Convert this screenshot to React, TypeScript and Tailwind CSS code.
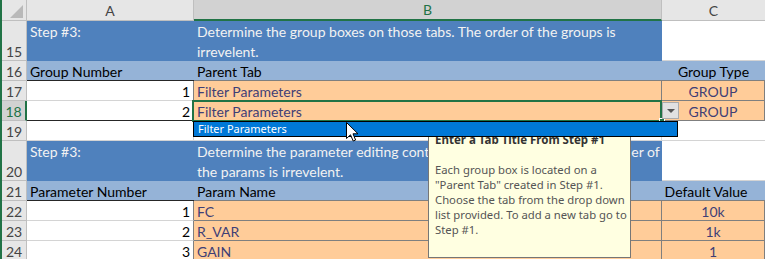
import type { ReactNode } from "react"

type CellProps = {
  children?: ReactNode
  className?: string
}

// generic sheet cell: text sits at the bottom like Excel does
function Cell({ children, className = "" }: CellProps) {
  return (
    <div className={`flex items-end overflow-hidden whitespace-nowrap px-[3px] leading-[16px] ${className}`}>
      {children}
    </div>
  )
}

// two line wrapped cell (rows 15 and 20)
function Wrap({ children, className = "" }: CellProps) {
  return (
    <div className={`flex items-end overflow-hidden whitespace-nowrap px-[3px] ${className}`}>
      <div className="-mb-px leading-[20px]">{children}</div>
    </div>
  )
}

function RowHead({ n, selected = false }: { n: number; selected?: boolean }) {
  return (
    <div
      className={`flex items-end justify-center leading-[17px] text-[14px] ${
        selected
          ? "bg-[#d2d2d2] text-[#217346] border-r-2 border-r-[#217346] border-b border-b-[#bfbfbf]"
          : "bg-[#e6e6e6] text-[#444] border-r border-b border-[#bfbfbf]"
      }`}
    >
      {n}
    </div>
  )
}

const blueDark = "bg-[#4f81bd] text-[#f2f2f2]"
const blueLight = "bg-[#95b3d7] text-black"
const input = "bg-[#ffcc99] text-[#3f3f76] border-r border-b border-[#7f7f7f]"
const plain = "bg-white text-black border-r border-b border-[#d4d4d4]"

export default function App() {
  return (
    <div className="relative flex h-[259px] w-[765px] overflow-hidden bg-white font-['Lato',sans-serif] text-[14px]">
      {/* green frame edge */}
      <div className="w-[2px] shrink-0 bg-[#217346]" />

      <div className="grid flex-1 grid-cols-[25px_167px_468px_1fr] grid-rows-[21px_40px_20px_20px_20px_20px_40px_20px_20px_20px_20px]">
        {/* column headers */}
        <div className="relative border-r border-b border-[#bfbfbf] bg-[#e6e6e6]">
          <div className="absolute right-[3px] bottom-[2px] h-0 w-0 border-l-[13px] border-t-[13px] border-l-transparent border-t-transparent border-b-0 border-r-[13px] border-r-[#b9b9b9]" />
        </div>
        <div className="flex items-center justify-center border-r border-b border-[#bfbfbf] bg-[#e6e6e6] text-[14px] text-[#444]">A</div>
        <div className="flex items-center justify-center border-r border-r-[#bfbfbf] border-b-2 border-b-[#217346] bg-[#d2d2d2] text-[14px] text-[#217346]">B</div>
        <div className="flex items-center justify-center border-b border-[#bfbfbf] bg-[#e6e6e6] text-[14px] text-[#444]">C</div>

        {/* 15 */}
        <RowHead n={15} />
        <Wrap className={blueDark}>
          Step #3:<br />&nbsp;
        </Wrap>
        <Wrap className={blueDark}>
          Determine the group boxes on those tabs. The order of the groups is
          <br />
          irrevelent.
        </Wrap>
        <Cell className="border-b border-[#d4d4d4]" />

        {/* 16 */}
        <RowHead n={16} />
        <Cell className={`${blueLight} border-b border-[#262626]`}>Group Number</Cell>
        <Cell className={`${blueLight} border-b border-[#7f7f7f]`}>Parent Tab</Cell>
        <Cell className={`${blueLight} justify-center border-b border-[#7f7f7f]`}>Group Type</Cell>

        {/* 17 */}
        <RowHead n={17} />
        <Cell className="justify-end border-r border-r-[#7f7f7f] border-b border-b-[#d4d4d4] bg-white">1</Cell>
        <Cell className={input}>Filter Parameters</Cell>
        <Cell className={`${input} justify-center`}>GROUP</Cell>

        {/* 18 */}
        <RowHead n={18} selected />
        <Cell className="justify-end border-r border-r-[#7f7f7f] border-b border-b-[#262626] bg-white">2</Cell>
        <Cell className={input}>Filter Parameters</Cell>
        <Cell className={`${input} justify-center`}>GROUP</Cell>

        {/* 19 */}
        <RowHead n={19} />
        <Cell className={plain} />
        <Cell className={plain} />
        <Cell className="border-b border-[#d4d4d4]" />

        {/* 20 */}
        <RowHead n={20} />
        <Wrap className={blueDark}>
          Step #3:<br />&nbsp;
        </Wrap>
        <Wrap className={blueDark}>
          Determine the parameter editing controls on those group tabs. The order of
          <br />
          the params is irrevelent.
        </Wrap>
        <Cell className="border-b border-[#d4d4d4]" />

        {/* 21 */}
        <RowHead n={21} />
        <Cell className={`${blueLight} border-b border-[#262626]`}>Parameter Number</Cell>
        <Cell className={`${blueLight} border-b border-[#7f7f7f]`}>Param Name</Cell>
        <Cell className={`${blueLight} justify-center border-b border-[#7f7f7f] pr-[18px]`}>Default Value</Cell>

        {/* 22-24 */}
        <RowHead n={22} />
        <Cell className="justify-end border-r border-r-[#7f7f7f] border-b border-b-[#d4d4d4] bg-white">1</Cell>
        <Cell className={input}>FC</Cell>
        <Cell className={`${input} justify-center`}>10k</Cell>

        <RowHead n={23} />
        <Cell className="justify-end border-r border-r-[#7f7f7f] border-b border-b-[#d4d4d4] bg-white">2</Cell>
        <Cell className={input}>R_VAR</Cell>
        <Cell className={`${input} justify-center`}>1k</Cell>

        <RowHead n={24} />
        <Cell className="justify-end border-r border-r-[#7f7f7f] border-b border-b-[#d4d4d4] bg-white">3</Cell>
        <Cell className={input}>GAIN</Cell>
        <Cell className={`${input} justify-center`}>1</Cell>
      </div>

      {/* active cell B18 */}
      <div className="pointer-events-none absolute left-[192px] top-[100px] h-[22px] w-[470px] border-2 border-[#217346]" />
      <div className="absolute left-[659px] top-[118px] h-[6px] w-[6px] border border-white bg-[#217346]" />

      {/* dropdown arrow button */}
      <div className="absolute left-[662px] top-[102px] flex h-[17px] w-[17px] items-center justify-center border border-[#ababab] bg-[#e1e1e1]">
        <div className="h-0 w-0 border-x-[4px] border-t-[4px] border-x-transparent border-t-[#555]" />
      </div>

      {/* input message tooltip */}
      <div className="absolute left-[428px] top-[130px] h-[128px] w-[203px] overflow-hidden whitespace-nowrap border border-[#767676] bg-[#ffffe1] px-[6px] pt-[1px] font-['Noto_Sans',sans-serif] text-[11.3px] leading-[15px] text-[#555]">
        <div className="text-[11.5px] font-bold text-[#333]">Enter a Tab Title From Step #1</div>
        <div className="h-[15px]" />
        <div>Each group box is located on a</div>
        <div>"Parent Tab" created in Step #1.</div>
        <div>Choose the tab from the drop down</div>
        <div>list provided. To add a new tab go to</div>
        <div>Step #1.</div>
      </div>

      {/* open list */}
      <div className="absolute left-[193px] top-[121px] flex h-[16px] w-[485px] items-center border border-black bg-[#0078d7] pl-[4px] font-['Noto_Sans',sans-serif] text-[11px] text-white">
        Filter Parameters
      </div>

      {/* mouse pointer */}
      <svg className="absolute left-[346px] top-[122px]" width="13" height="21" viewBox="0 0 13 21">
        <path d="M0.5 0.5 L0.5 16.5 L4.5 12.8 L7.2 19 L9.6 18 L7 11.8 L12 11.8 Z" fill="white" stroke="black" strokeWidth="1" strokeLinejoin="miter" />
      </svg>
    </div>
  )
}
